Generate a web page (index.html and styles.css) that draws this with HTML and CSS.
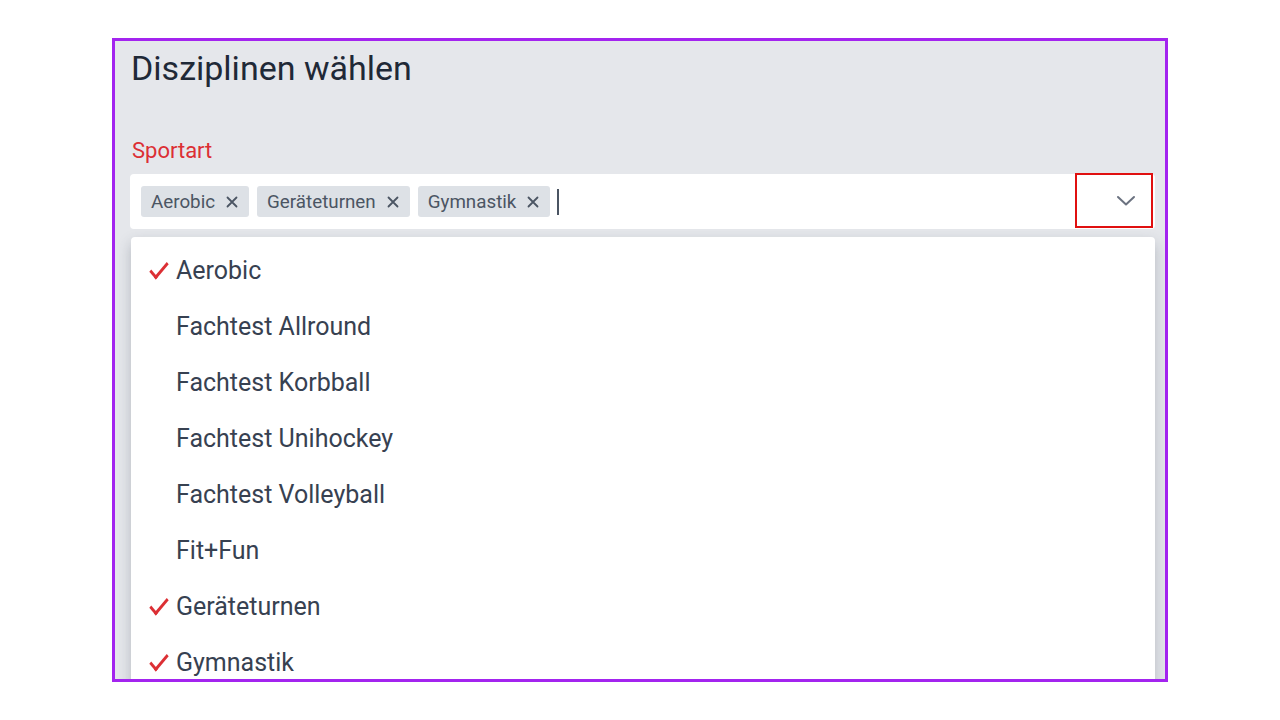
FILE: index.html
```html
<!DOCTYPE html>
<html lang="de">
<head>
    <meta charset="UTF-8">
    <meta name="viewport" content="width=device-width, initial-scale=1.0">
    <title>Disziplinen wählen</title>
    <link rel="stylesheet" href="styles.css">
</head>
<body>
    <div class="frame">
        <h1 class="title">Disziplinen wählen</h1>

        <label class="field-label" for="sportInput">Sportart</label>
        <div class="select-box">
            <div class="tags">
                <span class="tag">Aerobic
                    <svg class="tag-remove" width="12" height="12" viewBox="0 0 12 12"><path d="M1.5 1.5 L10.5 10.5 M10.5 1.5 L1.5 10.5" stroke="#4b5563" stroke-width="1.8" stroke-linecap="round"/></svg>
                </span>
                <span class="tag">Geräteturnen
                    <svg class="tag-remove" width="12" height="12" viewBox="0 0 12 12"><path d="M1.5 1.5 L10.5 10.5 M10.5 1.5 L1.5 10.5" stroke="#4b5563" stroke-width="1.8" stroke-linecap="round"/></svg>
                </span>
                <span class="tag">Gymnastik
                    <svg class="tag-remove" width="12" height="12" viewBox="0 0 12 12"><path d="M1.5 1.5 L10.5 10.5 M10.5 1.5 L1.5 10.5" stroke="#4b5563" stroke-width="1.8" stroke-linecap="round"/></svg>
                </span>
                <span class="caret"></span>
                <input type="text" id="sportInput" class="search">
            </div>
            <button class="toggle" aria-label="Öffnen">
                <svg width="20" height="12" viewBox="0 0 20 12">
                    <path d="M2 2 L10 9.5 L18 2" fill="none" stroke="#6b7280" stroke-width="2" stroke-linecap="round" stroke-linejoin="round"/>
                </svg>
            </button>
        </div>

        <ul class="options">
            <li class="option selected">Aerobic</li>
            <li class="option">Fachtest Allround</li>
            <li class="option">Fachtest Korbball</li>
            <li class="option">Fachtest Unihockey</li>
            <li class="option">Fachtest Volleyball</li>
            <li class="option">Fit+Fun</li>
            <li class="option selected">Geräteturnen</li>
            <li class="option selected">Gymnastik</li>
        </ul>
    </div>
</body>
</html>
```

FILE: styles.css
```css
body {
    margin: 0;
    background-color: #fff;
    font-family: Roboto, "Liberation Sans", sans-serif;
}

.frame {
    box-sizing: border-box;
    width: 1056px;
    height: 644px;
    margin: 38px 0 0 112px;
    padding: 0 10px 0 15px;
    border: 3px solid #a324ef;
    background-color: #e5e7eb;
    overflow: hidden;
}

.title {
    margin: 7px 0 0 1px;
    font-size: 34px;
    font-weight: 400;
    line-height: 40px;
    color: #1f2937;
}

.field-label {
    display: block;
    margin: 49px 0 0 2px;
    font-size: 22px;
    line-height: 28px;
    color: #dc2f34;
}

.select-box {
    display: flex;
    align-items: center;
    height: 55px;
    margin-top: 9px;
    background-color: #fff;
    border-radius: 4px;
}

.tags {
    flex: 1;
    display: flex;
    align-items: center;
    gap: 8px;
    padding-left: 11px;
}

.tag {
    display: flex;
    align-items: center;
    gap: 11px;
    height: 31px;
    padding: 0 11px 0 10px;
    background-color: #dde1e6;
    border-radius: 3px;
    font-size: 18.8px;
    color: #4b5563;
}

.caret {
    width: 2px;
    height: 26px;
    margin-left: -1px;
    background-color: #4b5563;
}

.search {
    width: 20px;
    border: none;
    outline: none;
    background: transparent;
}

.toggle {
    display: flex;
    align-items: center;
    justify-content: center;
    width: 78px;
    height: 55px;
    margin: 0 2px 2px 0;
    padding: 0;
    box-sizing: border-box;
    border: 2px solid #e01010;
    background: transparent;
    cursor: pointer;
}

.toggle svg {
    margin-left: 24px;
}

.options {
    list-style: none;
    margin: 8px 0 0 1px;
    padding: 6px 0;
    background-color: #fff;
    border-radius: 4px;
    box-shadow: 0 6px 14px rgba(55, 65, 81, 0.28);
}

.option {
    position: relative;
    height: 56px;
    line-height: 56px;
    padding-left: 45px;
    font-size: 25px;
    color: #374151;
}

/* red tick in front of the chosen entries */
.option.selected::before {
    content: "";
    position: absolute;
    left: 18px;
    top: 20px;
    width: 17px;
    height: 7px;
    border-left: 3px solid #dc2f34;
    border-bottom: 3px solid #dc2f34;
    transform: rotate(-50deg) skewX(-10deg);
    transform-origin: center;
}
```
